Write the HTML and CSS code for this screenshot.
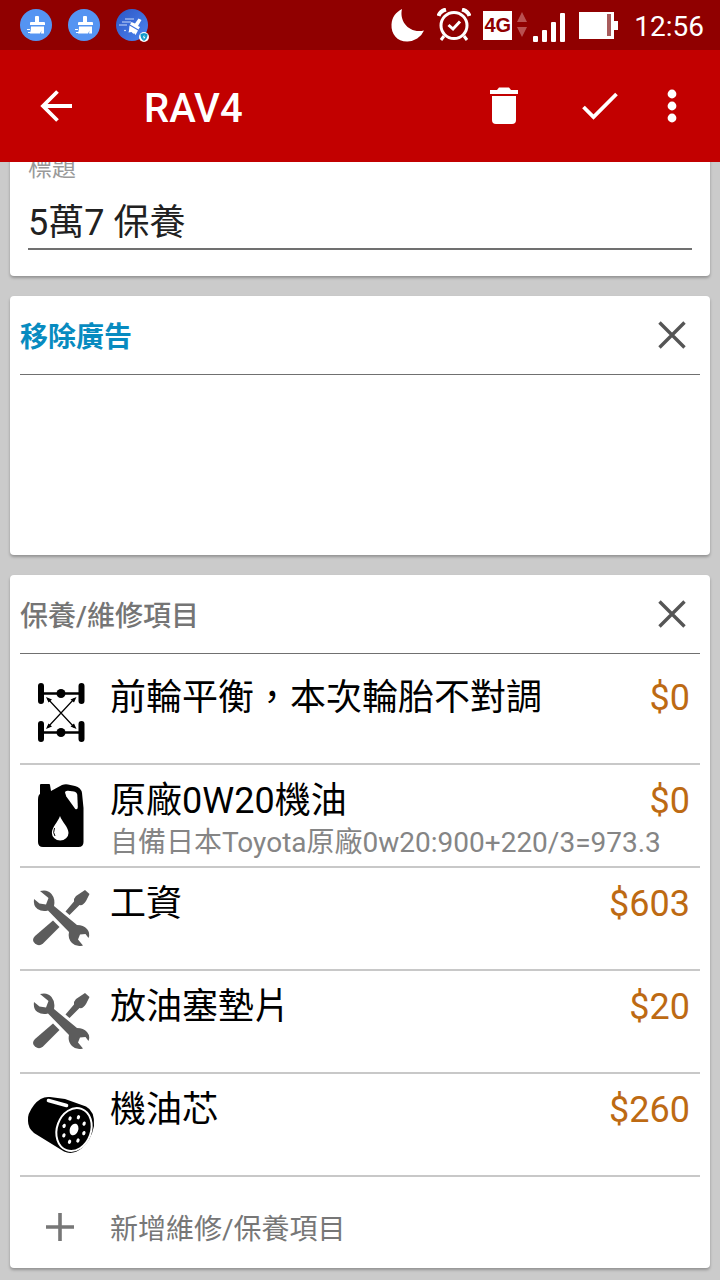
FILE: index.html
```html
<!DOCTYPE html>
<html lang="zh-Hant">
<head>
<meta charset="utf-8">
<meta name="viewport" content="width=device-width, initial-scale=1">
<title>RAV4</title>
<link rel="stylesheet" href="styles.css">
</head>
<body>
<svg class="defs" aria-hidden="true">
  <defs>
    <linearGradient id="boost" x1="0" y1="0" x2="1" y2="1">
      <stop offset="0" stop-color="#2c55c4"/>
      <stop offset="1" stop-color="#4d86f0"/>
    </linearGradient>
    <symbol id="brush" viewBox="0 0 32 32">
      <circle cx="16" cy="16" r="16" fill="#5594f2"/>
      <g fill="#fff">
        <path d="M15 8q0-1 1-1h2q1 0 1 1v5h5q1 0 1 1v2H10v-2q0-1 1-1h4z"/>
        <path d="M11 17.500h13v7h-3l.5-3-1.500 3H10q1-3 1-7z"/>
        <path d="M7 20h3v1H7zM8 23h3v1H8z"/>
      </g>
    </symbol>
    <symbol id="close" viewBox="0 0 28 28">
      <path d="M1.500 1.500l25 25M26.500 1.500l-25 25" stroke="#555" stroke-width="3.400" fill="none"/>
    </symbol>
    <symbol id="tools" viewBox="0 0 90 90">
      <g fill="#5c5c5c">
        <path d="M20 17l8.500 7-2.500 6.500-6.500-1-5.500-4.500q-1 7 3.500 10t10.500 1.500L49 58q-1.500 6.500 3 11t11 2.500l-5-6 2-5 5.500-.5 3 4q2-5-1.500-9t-10-4L34 32q1.500-7-2.500-12T20 17z"/>
        <path d="M45.500 37.500l8.500-10q-.5-3 2-5.500l9-6 4.500 4-3.500 7q-3 5-6.500 4L49.500 41z"/>
        <path d="M33 46.500l6.500 6.500-16.500 16.500q-4 3.500-8 0t0-7.500z"/>
      </g>
    </symbol>
  </defs>
</svg>
<div class="app">
  <div class="statusbar">
    <div class="notices">
      <svg width="32" height="32"><use href="#brush"/></svg>
      <svg width="32" height="32"><use href="#brush"/></svg>
      <svg class="booster" width="34" height="32" viewBox="0 0 34 32">
        <circle cx="16" cy="16" r="16" fill="url(#boost)"/>
        <path d="M9 10h9M6 13h9M3 16h8" stroke="#c9d9fa" stroke-width="1"/>
        <g fill="#fff">
          <path d="M22.500 9.500l3 1.500-3.500 6 2 1-1.500 2.500-8.500-5 1.500-2.500 3.500 1.500z"/>
          <path d="M13.500 16.500l8.500 5-2.500 4.500-1.500-2-.5 1-2-2-3 .5 .5-2z"/>
          <circle cx="9" cy="21.500" r=".8"/>
        </g>
        <circle cx="28" cy="28" r="5" fill="#fff"/>
        <path d="M28 24l3.500 1q.3 5-3.500 7-3.800-2-3.500-7z" fill="#139bc9"/>
        <path d="M28.500 25.500l-1.800 3h1.300l-.5 2.200 2-3H28z" fill="#fff"/>
      </svg>
    </div>
    <div class="signals">
      <svg width="34" height="33" viewBox="0 0 34 33">
        <path d="M11 0C8 12 18 25 33 21.500A18 18 0 0 1 16 32.500C6 32.500 0 25 .5 15.500 1 8 5 3 11 0z" fill="#fff"/>
      </svg>
      <svg class="alarm" width="34" height="34" viewBox="0 0 34 34" fill="none" stroke="#fff">
        <circle cx="17" cy="17.500" r="13" stroke-width="3"/>
        <path d="M11.500 17l4.500 4 7-7.500" stroke-width="3"/>
        <path d="M7 28l-3 4M27 28l3 4" stroke-width="3"/>
        <path d="M1.500 8Q3 3 9 1.500M32.500 8Q31 3 25 1.500" stroke-width="4"/>
      </svg>
      <span class="network">4G</span>
      <svg class="traffic" width="10" height="26" viewBox="0 0 10 26">
        <path d="M5 0l5 10H0zM5 25L0 15h10z" fill="#b95050"/>
      </svg>
      <svg class="bars" width="33" height="29" viewBox="0 0 33 29" fill="#fff">
        <rect y="23" width="5" height="6" rx="1"/>
        <rect x="9" y="17" width="5" height="12" rx="1"/>
        <rect x="18" y="9" width="5" height="20" rx="1"/>
        <rect x="27" y="0" width="5" height="29" rx="1"/>
      </svg>
      <svg class="battery" width="39" height="27" viewBox="0 0 39 27">
        <path d="M0 0h35v9h4v9h-4v9H0z" fill="#fff"/>
        <rect x="28" y="2" width="4" height="22" fill="#a85c5c"/>
      </svg>
      <time>12:56</time>
    </div>
  </div>
  <header class="appbar">
    <button class="iconbtn" aria-label="返回">
      <svg width="32" height="32" viewBox="0 0 32 32" fill="none" stroke="#fff" stroke-width="3.800">
        <path d="M32 16H3M17.500 1.500L3 16l14.500 14.500"/>
      </svg>
    </button>
    <h1>RAV4</h1>
    <button class="iconbtn" aria-label="刪除">
      <svg width="30" height="38" viewBox="0 0 30 38" fill="#fff">
        <path d="M1 3h7l2-2.500h10L22 3h7v4H1z"/>
        <path d="M3 9h24v24q0 4-4 4H7q-4 0-4-4z"/>
      </svg>
    </button>
    <button class="iconbtn save" aria-label="儲存">
      <svg width="36" height="28" viewBox="0 0 36 28" fill="none" stroke="#fff" stroke-width="3.800">
        <path d="M1.500 15l10 10L34.500 2"/>
      </svg>
    </button>
    <button class="iconbtn more" aria-label="更多">
      <svg width="10" height="34" viewBox="0 0 10 34" fill="#fff">
        <circle cx="5" cy="5" r="4.400"/><circle cx="5" cy="17" r="4.400"/><circle cx="5" cy="29" r="4.400"/>
      </svg>
    </button>
  </header>
  <main>
    <section class="card titlecard">
      <label for="title">標題</label>
      <input id="title" type="text" value="5萬7 保養">
    </section>
    <section class="card adcard">
      <div class="cardhead">
        <a class="removeads" href="#">移除廣告</a>
        <button class="iconbtn" aria-label="關閉"><svg width="28" height="28"><use href="#close"/></svg></button>
      </div>
      <div class="adspace"></div>
    </section>
    <section class="card">
      <div class="cardhead">
        <h2>保養/維修項目</h2>
        <button class="iconbtn" aria-label="關閉"><svg width="28" height="28"><use href="#close"/></svg></button>
      </div>
      <ul class="items">
        <li class="item first">
          <svg width="90" height="90" viewBox="0 0 90 90">
            <g stroke="#000" stroke-linecap="round">
              <path d="M21 18v15M61.500 18v15M21 56v15M61.500 56v15" stroke-width="6"/>
              <path d="M21 25.500h40M21 64.500h40" stroke-width="2.600"/>
              <path d="M28 31l26 28M54 31L28 59" stroke-width="1.200"/>
            </g>
            <circle cx="41" cy="25.500" r="4.500"/><circle cx="41" cy="64.500" r="4.500"/>
            <path d="M26 29l6 2.500-3.500 3zM56.500 29l-6 2.500 3.500 3zM26 61l6-2.500-3.500-3zM56.500 61l-6-2.500 3.500-3z"/>
          </svg>
          <div class="text"><h3>前輪平衡，本次輪胎不對調</h3></div>
          <span class="price">$0</span>
        </li>
        <li class="item">
          <svg width="90" height="90" viewBox="0 0 90 90">
            <path d="M20 14q0-1 1-1h8q1 0 1 1l1 6 11-6q3-1 6-.5l7 1.500q6 1.500 7 7l1.500 15V71q0 5-5 5H23q-5 0-5-5V29q0-5 2-6z"/>
            <path d="M45 21.500q0-2 3-1.800l6 .8q3 .5 3.300 3.500l.5 12q0 3-2.500 2l-9-12.500z" fill="#fff"/>
            <path d="M40 45c2 6 8.500 11 8.500 17a8.300 7.500 0 0 1-16.600 0C31.900 56 38 51 40 45z" fill="#fff"/>
            <path d="M34.500 57q-2 5 .5 8" fill="none" stroke="#000"/>
          </svg>
          <div class="text"><h3>原廠0W20機油</h3><p>自備日本Toyota原廠0w20:900+220/3=973.3</p></div>
          <span class="price">$0</span>
        </li>
        <li class="item">
          <svg width="90" height="90"><use href="#tools"/></svg>
          <div class="text"><h3>工資</h3></div>
          <span class="price">$603</span>
        </li>
        <li class="item">
          <svg width="90" height="90"><use href="#tools"/></svg>
          <div class="text"><h3>放油塞墊片</h3></div>
          <span class="price">$20</span>
        </li>
        <li class="item">
          <svg width="90" height="90" viewBox="0 -5 90 90">
            <path d="M30 12q-9-1-16 8T8 36q0 7 6 12l30 18.500q9 4 18-3.500T74 41q1-15-8-19.500L45 14z"/>
            <path d="M28.500 15.500l18 5" stroke="#fff" stroke-width="3.600" stroke-linecap="round"/>
            <g transform="translate(54 44.500) rotate(20)" fill="#fff">
              <ellipse rx="17" ry="22" fill="none" stroke="#fff" stroke-width="2"/>
              <ellipse rx="4.200" ry="6"/>
              <ellipse cy="-13" rx="1.600" ry="2.200"/><ellipse cy="13" rx="1.600" ry="2.200"/>
              <ellipse cx="-10.500" rx="1.600" ry="2.200"/><ellipse cx="10.500" rx="1.600" ry="2.200"/>
              <ellipse cx="-7.500" cy="-9" rx="1.600" ry="2.200"/><ellipse cx="7.500" cy="-9" rx="1.600" ry="2.200"/>
              <ellipse cx="-7.500" cy="9" rx="1.600" ry="2.200"/><ellipse cx="7.500" cy="9" rx="1.600" ry="2.200"/>
            </g>
          </svg>
          <div class="text"><h3>機油芯</h3></div>
          <span class="price">$260</span>
        </li>
      </ul>
      <button class="additem">
        <svg width="28" height="28" viewBox="0 0 28 28"><path d="M14 0v28M0 14h28" stroke="#777" stroke-width="3.600"/></svg>
        <span>新增維修/保養項目</span>
      </button>
    </section>
  </main>
</div>
</body>
</html>
```

FILE: styles.css
```css
* { box-sizing: border-box; }

body {
  margin: 0;
  background: #cbcbcb;
  font-family: Roboto, "Noto Sans CJK TC", sans-serif;
}

h1, h2, h3, p, ul { margin: 0; padding: 0; }
svg { display: block; flex: none; }
.defs { position: absolute; width: 0; height: 0; }

.app {
  min-height: 100vh;
  display: flex;
  flex-direction: column;
}

.statusbar {
  height: 50px;
  padding: 0 16px 0 20px;
  display: flex;
  align-items: center;
  justify-content: space-between;
  background: #900000;
  color: #fff;
}

.notices { display: flex; gap: 16px; }
.booster { overflow: visible; }
.signals { display: flex; align-items: center; }
.alarm { margin-left: 12px; }

.network {
  width: 29px;
  margin-left: 12px;
  background: #fff;
  color: #900000;
  font: bold 20px/29px "Liberation Sans", sans-serif;
  text-align: center;
}

.traffic { margin-left: 5px; }
.bars { margin: 4px 0 0 6px; }
.battery { margin-left: 13px; }

time {
  margin-left: 16px;
  padding-top: 4px;
  font-size: 28px;
  line-height: 32px;
}

.appbar {
  height: 112px;
  padding: 0 28px;
  display: flex;
  align-items: center;
  background: #c20000;
  color: #fff;
  position: relative;
  z-index: 1;
}

.appbar h1 {
  flex: 1;
  margin-left: 60px;
  font-size: 40px;
  font-weight: 500;
  line-height: 48px;
  padding-top: 6px;
}

.iconbtn {
  display: flex;
  align-items: center;
  justify-content: center;
  width: 56px;
  height: 56px;
  padding: 0;
  border: 0;
  background: none;
}

.save { margin-left: 40px; }
.more { margin-left: 24px; width: 40px; }

main {
  flex: 1;
  display: flex;
  flex-direction: column;
  gap: 20px;
  padding: 0 10px 12px;
}

.card {
  padding: 0 10px;
  border-radius: 4px;
  background: #fff;
  box-shadow: 0 2px 3px rgba(0, 0, 0, 0.28);
}

.titlecard {
  margin-top: -12px;
  padding: 0 18px 26px;
  display: flex;
  flex-direction: column;
}

.titlecard label {
  color: #999;
  font-size: 24px;
  line-height: 36px;
}

.titlecard input {
  width: 100%;
  height: 64px;
  padding: 4px 0 0;
  border: 0;
  border-bottom: 2px solid #707070;
  border-radius: 0;
  background: none;
  color: #212121;
  font: inherit;
  font-size: 36px;
}

.cardhead {
  height: 79px;
  display: flex;
  align-items: center;
  justify-content: space-between;
  border-bottom: 1px solid #707070;
}

.cardhead h2, .removeads {
  padding-top: 6px;
  font-size: 28px;
  font-weight: 500;
  line-height: 40px;
}

.cardhead h2 { color: #757575; }

.removeads {
  color: #078bc0;
  font-weight: 700;
  text-decoration: none;
}

.adspace { height: 180px; }

.items { list-style: none; }

.item {
  height: 103px;
  display: flex;
  border-bottom: 2px solid #c8c8c8;
}

.item > svg { margin-top: 6px; }

.item.first {
  height: 111px;
  padding-top: 8px;
}

.text {
  flex: 1;
  min-width: 0;
}

.item h3, .price {
  font-size: 36px;
  font-weight: 400;
  line-height: 44px;
  padding-top: 14px;
}

.item p {
  color: #858585;
  font-size: 28px;
  line-height: 40px;
  white-space: nowrap;
}

.price {
  padding-right: 10px;
  color: #bd6a13;
}

.additem {
  width: 100%;
  height: 91px;
  padding: 8px 26px 0;
  display: flex;
  align-items: center;
  gap: 36px;
  border: 0;
  background: none;
  color: #777;
  font: inherit;
  font-size: 28px;
}
```
